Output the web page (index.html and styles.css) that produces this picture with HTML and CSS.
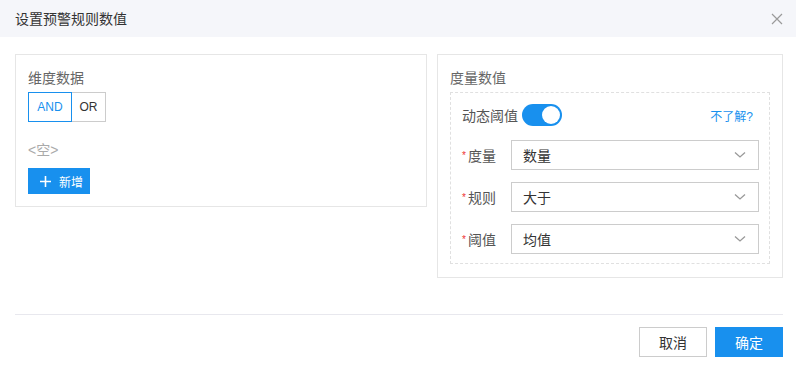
FILE: index.html
```html
<!DOCTYPE html>
<html>
  <head>
    <title>设置预警规则数值</title>
    <link rel="stylesheet" href="styles.css">
  </head>
  <body>
    <div class="dialog">
      <div class="dialog-header">
        <span class="dialog-title">设置预警规则数值</span>
        <button class="close-button" title="关闭">
          <svg width="12" height="12" viewBox="0 0 12 12">
            <path d="M1 1 L11 11 M11 1 L1 11" stroke="#9a9a9a" stroke-width="1.2" fill="none" />
          </svg>
        </button>
      </div>

      <div class="dialog-body">
        <div class="panel panel-dim">
          <div class="panel-title">维度数据</div>
          <div class="logic-group">
            <button class="logic-btn active">AND</button>
            <button class="logic-btn">OR</button>
          </div>
          <div class="empty-text">&lt;空&gt;</div>
          <button class="add-button">
            <svg width="11" height="11" viewBox="0 0 11 11">
              <path d="M5.5 0 V11 M0 5.5 H11" stroke="#fff" stroke-width="1.6" fill="none" />
            </svg>
            <span>新增</span>
          </button>
        </div>

        <div class="panel panel-measure">
          <div class="panel-title">度量数值</div>
          <div class="measure-box">
            <div class="switch-row">
              <span class="switch-label">动态阈值</span>
              <span class="switch on"><span class="switch-knob"></span></span>
              <a class="help-link" href="#">不了解?</a>
            </div>

            <div class="form-row">
              <label class="form-label"><i class="required">*</i>度量</label>
              <div class="select-box">
                <span>数量</span>
                <svg class="chevron" width="12" height="8" viewBox="0 0 12 8">
                  <path d="M1 1.5 L6 6 L11 1.5" stroke="#999" stroke-width="1.3" fill="none" />
                </svg>
              </div>
            </div>
            <div class="form-row">
              <label class="form-label"><i class="required">*</i>规则</label>
              <div class="select-box">
                <span>大于</span>
                <svg class="chevron" width="12" height="8" viewBox="0 0 12 8">
                  <path d="M1 1.5 L6 6 L11 1.5" stroke="#999" stroke-width="1.3" fill="none" />
                </svg>
              </div>
            </div>
            <div class="form-row">
              <label class="form-label"><i class="required">*</i>阈值</label>
              <div class="select-box">
                <span>均值</span>
                <svg class="chevron" width="12" height="8" viewBox="0 0 12 8">
                  <path d="M1 1.5 L6 6 L11 1.5" stroke="#999" stroke-width="1.3" fill="none" />
                </svg>
              </div>
            </div>
          </div>
        </div>
      </div>

      <div class="dialog-footer">
        <button class="btn btn-default">取消</button>
        <button class="btn btn-primary">确定</button>
      </div>
    </div>
  </body>
</html>
```

FILE: styles.css
```css
body {
  margin: 0;
  font-family: "Liberation Sans", "Noto Sans CJK SC", sans-serif;
  font-size: 14px;
  color: #333;
  background-color: #fff;
}

button {
  font-family: inherit;
  cursor: pointer;
}

.dialog {
  width: 796px;
  height: 369px;
  background-color: #fff;
}

.dialog-header {
  height: 37px;
  background-color: #f5f6fa;
  display: flex;
  align-items: center;
  justify-content: space-between;
  padding: 0 13px 0 15px;
}

.dialog-title {
  font-size: 14px;
  line-height: 20px;
  color: #333;
}

.close-button {
  border: none;
  background: none;
  padding: 0;
  width: 12px;
  height: 12px;
  display: flex;
}

.dialog-body {
  display: flex;
  align-items: flex-start;
  gap: 10px;
  padding: 17px 13px 36px 15px;
}

.panel {
  border: 1px solid #e6e6e6;
  background-color: #fff;
}

.panel-title {
  font-size: 14px;
  line-height: 20px;
  color: #666;
}

.panel-dim {
  width: 386px;
  padding: 13px 12px 12px 12px;
}

.logic-group {
  display: flex;
  margin-top: 4px;
}

.logic-btn {
  height: 30px;
  padding: 0;
  font-size: 12px;
  background-color: #fff;
  border: 1px solid #ccc;
  color: #333;
}

.logic-btn:first-child {
  width: 44px;
}

.logic-btn + .logic-btn {
  width: 34px;
  border-left: none;
}

.logic-btn.active {
  color: #1890ee;
  border-color: #1890ee;
}

.empty-text {
  margin-top: 18px;
  line-height: 20px;
  font-size: 14px;
  color: #aaa;
}

.add-button {
  margin-top: 8px;
  height: 26px;
  width: 62px;
  padding: 0 0 0 12px;
  border: none;
  background-color: #1890ee;
  color: #fff;
  font-size: 12px;
  display: flex;
  align-items: center;
  gap: 8px;
}

.panel-measure {
  width: 320px;
  padding: 13px 12px 13px 12px;
}

.measure-box {
  margin-top: 4px;
  border: 1px dashed #e0e0e0;
  padding: 11px 10px 9px 11px;
}

.switch-row {
  display: flex;
  align-items: center;
  height: 22px;
}

.switch-label {
  font-size: 14px;
  color: #555;
  margin-right: 4px;
}

.switch {
  width: 40px;
  height: 22px;
  border-radius: 11px;
  background-color: #ccc;
  position: relative;
  display: inline-block;
}

.switch.on {
  background-color: #1890ee;
}

.switch-knob {
  position: absolute;
  top: 2px;
  left: 2px;
  width: 18px;
  height: 18px;
  border-radius: 50%;
  background-color: #fff;
}

.switch.on .switch-knob {
  left: 20px;
}

.help-link {
  margin-left: auto;
  margin-right: 6px;
  font-size: 12px;
  color: #1890ee;
  text-decoration: none;
}

.form-row {
  display: flex;
  align-items: center;
  margin-top: 12px;
}

.switch-row + .form-row {
  margin-top: 14px;
}

.form-label {
  width: 49px;
  flex-shrink: 0;
  font-size: 14px;
  color: #555;
  display: flex;
  align-items: center;
}

.required {
  font-style: normal;
  color: #e33;
  font-size: 10px;
  width: 6px;
  line-height: 10px;
  height: 6px;
  margin-bottom: 2px;
}

.select-box {
  flex: 1;
  height: 30px;
  box-sizing: border-box;
  border: 1px solid #ccc;
  padding: 0 12px 0 11px;
  display: flex;
  align-items: center;
  justify-content: space-between;
  font-size: 14px;
  color: #333;
}

.dialog-footer {
  margin: 0 13px 0 15px;
  border-top: 1px solid #e8e8ee;
  padding-top: 12px;
  display: flex;
  justify-content: flex-end;
  gap: 8px;
}

.btn {
  width: 68px;
  height: 30px;
  font-size: 14px;
  padding: 0;
}

.btn-default {
  background-color: #fff;
  border: 1px solid #ccc;
  color: #333;
}

.btn-primary {
  background-color: #1890ee;
  border: 1px solid #1890ee;
  color: #fff;
}
```
